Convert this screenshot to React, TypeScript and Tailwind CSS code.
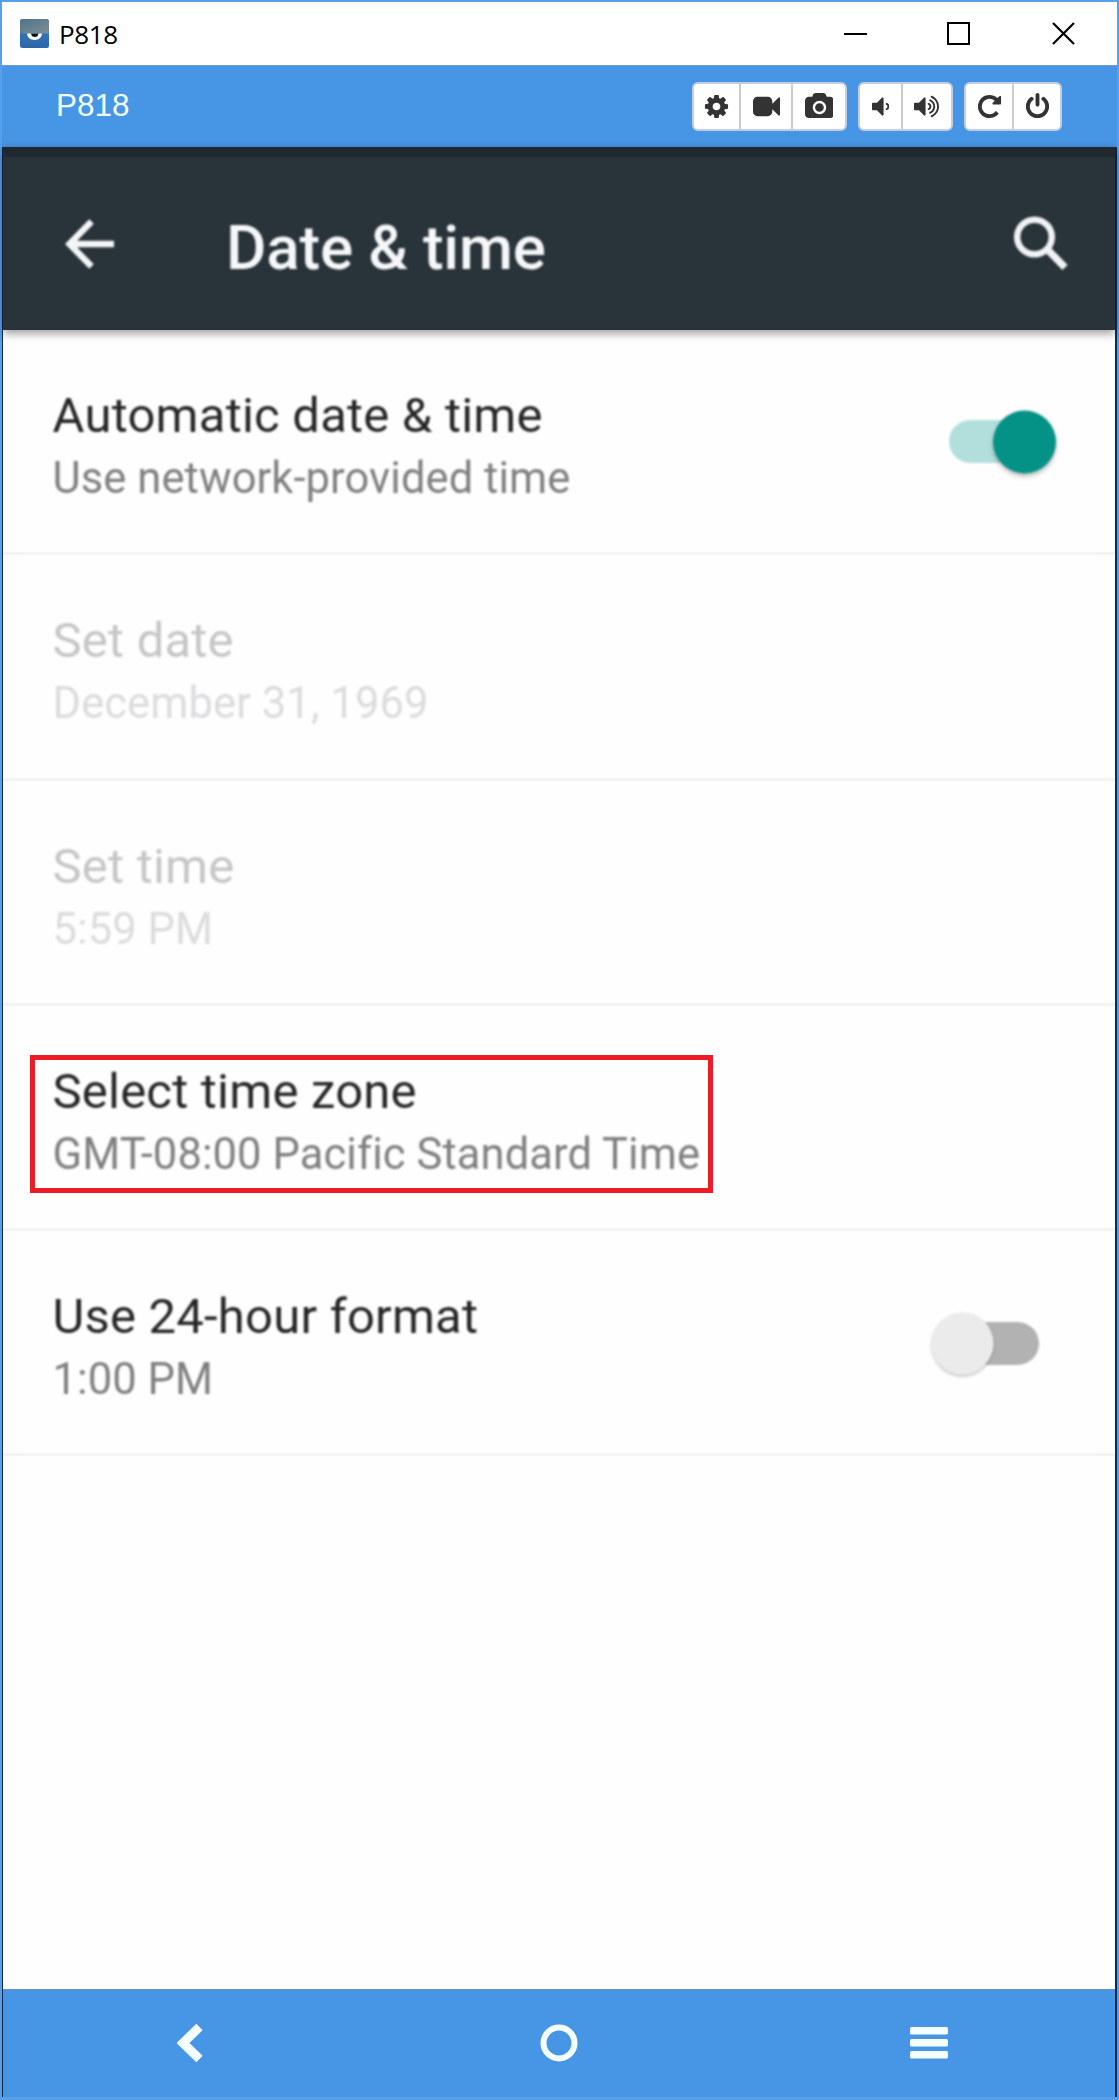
import React from "react";

const COG =
  "M1152 896q0-106-75-181t-181-75-181 75-75 181 75 181 181 75 181-75 75-181zm512-109v222q0 12-8 23t-20 13l-185 28q-19 54-39 91 35 50 107 138 10 12 10 25t-9 23q-27 37-99 108t-94 71q-12 0-26-9l-138-108q-44 23-91 38-16 136-29 186-7 28-36 28h-222q-14 0-24.5-8.5t-11.5-21.5l-28-184q-49-16-90-37l-141 107q-10 9-25 9-14 0-25-11-126-114-165-168-7-10-7-23 0-12 8-23 15-21 51-66.5t54-70.5q-27-50-41-99l-183-27q-13-2-21-12.5t-8-23.5v-222q0-12 8-23t19-13l186-28q14-46 39-92-40-57-107-138-10-12-10-24 0-10 9-23 26-36 98.5-107.5t94.5-71.5q13 0 26 10l138 107q44-23 91-38 16-136 29-186 7-28 36-28h222q14 0 24.5 8.5t11.5 21.5l28 184q49 16 90 37l142-107q9-9 24-9 13 0 25 10 129 119 165 170 7 8 7 22 0 12-8 23-15 21-51 66.5t-54 70.5q26 50 41 98l183 28q13 2 21 12.5t8 23.5z";
const VIDEO =
  "M1792 352v1088q0 42-39 59-13 5-25 5-27 0-45-19l-403-403v166q0 119-84.5 203.5T992 1536H288q-119 0-203.5-84.5T0 1248V544q0-119 84.5-203.5T288 256h704q119 0 203.5 84.5T1280 544v165l403-402q18-19 45-19 12 0 25 5 39 17 39 59z";
const CAMERA =
  "M960 672q119 0 203.5 84.5t84.5 203.5-84.5 203.5-203.5 84.5-203.5-84.5-84.5-203.5 84.5-203.5 203.5-84.5zm704-416q106 0 181 75t75 181v896q0 106-75 181t-181 75h-1408q-106 0-181-75t-75-181v-896q0-106 75-181t181-75h224l51-136q19-49 69.5-84.5t103.5-35.5h512q53 0 103.5 35.5t69.5 84.5l51 136h224zm-704 1152q185 0 316.5-131.5t131.5-316.5-131.5-316.5-316.5-131.5-316.5 131.5-131.5 316.5 131.5 316.5 316.5 131.5z";
const VOLUME_DOWN =
  "M768 352v1088q0 26-19 45t-45 19-45-19l-333-333h-262q-26 0-45-19t-19-45v-384q0-26 19-45t45-19h262l333-333q19-19 45-19t45 19 19 45zm384 544q0 76-42.5 141.5t-112.5 93.5q-10 5-25 5-26 0-45-18.5t-19-45.5q0-21 12-35.5t29-25 34-23 29-36 12-56.5-12-56.5-29-36-34-23-29-25-12-35.5q0-27 19-45.5t45-18.5q15 0 25 5 70 27 112.5 93t42.5 142z";
const VOLUME_UP =
  VOLUME_DOWN +
  "m256 0q0 153-85 282.5t-225 188.5q-13 5-25 5-27 0-46-19t-19-45q0-39 39-59 56-29 76-44 74-54 115.5-135.5t41.5-173.5-41.5-173.5-115.5-135.5q-20-15-76-44-39-20-39-59 0-26 19-45t45-19q13 0 26 5 140 59 225 188.5t85 282.5zm256 0q0 230-127 422.5t-338 283.5q-13 5-26 5-26 0-45-19t-19-45q0-36 39-59 7-4 22.5-10.5t22.5-10.5q46-25 82-51 123-91 192-227t69-289-69-289-192-227q-36-26-82-51-7-4-22.5-10.5t-22.5-10.5q-39-23-39-59 0-26 19-45t45-19q13 0 26 5 211 91 338 283.5t127 422.5z";
const REPEAT =
  "M1664 256v448q0 26-19 45t-45 19h-448q-42 0-59-40-17-39 14-69l138-138q-148-137-349-137-104 0-198.5 40.5t-163.5 109.5-109.5 163.5-40.5 198.5 40.5 198.5 109.5 163.5 163.5 109.5 198.5 40.5q119 0 225-52t179-147q7-10 23-12 15 0 25 9l137 138q9 8 9.5 20.5t-7.5 22.5q-109 132-264 204.5t-327 72.5q-156 0-298-61t-245-164-164-245-61-298 61-298 164-245 245-164 298-61q147 0 284.5 55.5t244.5 156.5l130-129q29-31 70-14 39 17 39 59z";
const POWER =
  "M1664 896q0 156-61 298t-164 245-245 164-298 61-298-61-245-164-164-245-61-298q0-182 80.5-343t226.5-270q43-32 95.5-25t83.5 50q32 42 24.5 94.5t-49.5 84.5q-98 74-151.5 181t-53.5 228q0 104 40.5 198.5t109.5 163.5 163.5 109.5 198.5 40.5 198.5-40.5 163.5-109.5 109.5-163.5 40.5-198.5q0-121-53.5-228t-151.5-181q-42-32-49.5-84.5t24.5-94.5q31-43 84-50t95 25q146 109 226.5 270t80.5 343zm-640-768v640q0 52-38 90t-90 38-90-38-38-90v-640q0-52 38-90t90-38 90 38 38 90z";

type IconDef = { d: string; units: number; cell: string; label: string };

const groups: IconDef[][] = [
  [
    { d: COG, units: 1792, cell: "w-[47px]", label: "Settings" },
    { d: VIDEO, units: 1792, cell: "w-[52px]", label: "Record" },
    { d: CAMERA, units: 1920, cell: "w-[52px]", label: "Screenshot" },
  ],
  [
    { d: VOLUME_DOWN, units: 1152, cell: "w-[43px]", label: "Volume down" },
    { d: VOLUME_UP, units: 1664, cell: "w-[48px]", label: "Volume up" },
  ],
  [
    { d: REPEAT, units: 1792, cell: "w-[48px]", label: "Rotate" },
    { d: POWER, units: 1792, cell: "w-[46px]", label: "Power" },
  ],
];

function TitleBar() {
  return (
    <div className="flex h-[63px] shrink-0 items-center bg-white pl-[18px] pr-[42px]">
      <svg width="29" height="29" viewBox="0 0 29 29">
        <defs>
          <linearGradient id="top" x1="0" y1="0" x2="1" y2="1">
            <stop offset="0" stopColor="#4f7389" />
            <stop offset="1" stopColor="#7c8f96" />
          </linearGradient>
          <linearGradient id="bottom" x1="0" y1="0" x2="0" y2="1">
            <stop offset="0" stopColor="#3a7fc6" />
            <stop offset="1" stopColor="#2c66a8" />
          </linearGradient>
        </defs>
        <rect width="29" height="29" rx="2.5" fill="url(#bottom)" />
        <path d="M0 14.500V2.500Q0 0 2.500 0h24Q29 0 29 2.500v12z" fill="url(#top)" />
        <path d="M7 14.500h15q-.5 6.500-7.500 6.500T7 14.500z" fill="#fff" />
        <path d="M11 14.500h7.500q-.5 3.500-3.700 3.500T11 14.500z" fill="#111" />
      </svg>
      <span className="ml-[10px] font-['Open_Sans','Noto_Sans',sans-serif] text-[26px] leading-8 tracking-[-0.4px] text-black">
        P818
      </span>
      <div className="ml-auto flex items-center text-black">
        <svg width="23" height="23" viewBox="0 0 23 23" fill="none" stroke="currentColor" strokeWidth="2">
          <path d="M0 12h23" />
        </svg>
        <svg className="ml-20" width="23" height="23" viewBox="0 0 23 23" fill="none" stroke="currentColor" strokeWidth="2">
          <rect x="1" y="1" width="21" height="21" />
        </svg>
        <svg className="ml-[82px]" width="23" height="23" viewBox="0 0 23 23" fill="none" stroke="currentColor" strokeWidth="2.2">
          <path d="M1 1l21 21M22 1L1 22" />
        </svg>
      </div>
    </div>
  );
}

function Toolbar() {
  return (
    <div className="flex h-[82px] shrink-0 items-center border-t border-[#6c9cc8] bg-[#4795e5] pl-[54px] pr-[55px]">
      <span className="-mt-1 font-['Liberation_Sans',Arial,sans-serif] text-[31.5px] leading-9 text-[#f4ffff]">P818</span>
      <div className="ml-auto flex gap-[11px]">
        {groups.map((g, i) => (
          <div key={i} className="box-content flex h-[45px] divide-x-2 divide-[#ccc] rounded-[6px] border-2 border-[#c3cde0] bg-white">
            {g.map((ic) => (
              <div key={ic.label} aria-label={ic.label} className={`flex items-center justify-center ${ic.cell}`}>
                <svg width={(ic.units * 27) / 1792} height="27" viewBox={`0 0 ${ic.units} 1792`} fill="#333">
                  <path d={ic.d} />
                </svg>
              </div>
            ))}
          </div>
        ))}
      </div>
    </div>
  );
}

function Header() {
  return (
    <div className="z-10 flex h-[183px] shrink-0 items-center border-t-[10px] border-[#20292f] bg-[#29333a] pl-[62px] pr-[47px] shadow-[0_3px_9px_rgba(0,0,0,0.42)]">
      <svg className="blur-[0.9px]" width="49" height="50" viewBox="0 0 49 50" fill="none" stroke="#f4f5f6" strokeWidth="6.500">
        <path d="M49 25H6M26.500 2.500L4.500 25l22 22.500" />
      </svg>
      <h1 className="ml-[112px] mt-[8px] font-['Roboto',sans-serif] text-[62px] font-medium leading-[72px] tracking-[-0.2px] text-[#f6f7f8] blur-[1px]">
        Date &amp; time
      </h1>
      <svg className="ml-auto blur-[0.9px]" width="54" height="55" viewBox="0 0 54 55" fill="none" stroke="#f0f2f4">
        <circle cx="20.500" cy="21" r="17.300" strokeWidth="6.500" />
        <path d="M33 33l18 18.500" strokeWidth="7.500" />
      </svg>
    </div>
  );
}

function Switch({ on }: { on: boolean }) {
  return (
    <svg className="overflow-visible blur-[0.9px]" width="108" height="64" viewBox="0 0 108 64">
      {on ? (
        <>
          <rect x="0" y="10" width="100" height="43" rx="21.500" fill="#b2dfdc" />
          <circle className="drop-shadow-[0_3px_2px_rgba(0,0,0,0.25)]" cx="75.500" cy="32" r="31.500" fill="#049286" />
        </>
      ) : (
        <>
          <rect x="8" y="10" width="100" height="43" rx="21.500" fill="#b2b2b2" />
          <circle className="drop-shadow-[0_2px_1.5px_rgba(0,0,0,0.22)]" cx="31.500" cy="31.500" r="31" fill="#ebebeb" />
        </>
      )}
    </svg>
  );
}

type RowProps = { title: string; sub: string; disabled?: boolean; highlight?: boolean; children?: React.ReactNode };

function Row({ title, sub, disabled, highlight, children }: RowProps) {
  return (
    <div className="relative flex h-[225.3px] shrink-0 items-start border-b-[3px] border-[#f4f4f4] pl-[49.5px] pt-[55px]">
      <div className="whitespace-nowrap font-['Roboto',sans-serif] blur-[1.1px]">
        <div className={`text-[49px] leading-[61px] tracking-[0.22px] ${disabled ? "text-[#c6c6c6]" : "text-[#262626]"}`}>{title}</div>
        <div className={`text-[43.5px] leading-[65px] tracking-[0.08px] ${disabled ? "text-[#dcdcde]" : "text-[#808080]"}`}>{sub}</div>
      </div>
      {children}
      {highlight && <div className="absolute left-[27px] top-[49px] h-[138px] w-[683px] border-[5px] border-[#ed1c24]" />}
    </div>
  );
}

function NavBar() {
  return (
    <div className="grid h-[108px] shrink-0 grid-cols-3 items-center border-t border-[#6c8fb4] bg-[#4795e5] pb-0.5">
      <svg className="ml-[174px]" width="27" height="40" viewBox="0 0 27 40" fill="none" stroke="#f6ffff" strokeWidth="9">
        <path d="M22.500 4L6 20l16.500 16" />
      </svg>
      <svg className="mx-auto" width="38" height="38" viewBox="0 0 38 38" fill="none" stroke="#f6ffff" strokeWidth="6">
        <circle cx="19" cy="19" r="15.500" />
      </svg>
      <svg className="ml-[166px]" width="38" height="32" viewBox="0 0 38 32" fill="#f6ffff">
        <rect width="38" height="7.500" rx="1.500" />
        <rect y="12" width="38" height="7.500" rx="1.500" />
        <rect y="24" width="38" height="7.500" rx="1.500" />
      </svg>
    </div>
  );
}

export default function App() {
  return (
    <div className="flex h-[2100px] w-[1119px] flex-col border-2 border-b-[3px] border-[#589fe9] bg-white">
      <TitleBar />
      <Toolbar />
      <div className="flex min-h-0 flex-1 flex-col border-l border-r-2 border-l-[#12294a] border-r-[#12294a]">
        <Header />
        <div className="flex min-h-0 flex-1 flex-col bg-[#fefefe]">
          <Row title="Automatic date & time" sub="Use network-provided time">
            <div className="ml-auto mr-[58px] mt-[25px]">
              <Switch on />
            </div>
          </Row>
          <Row title="Set date" sub="December 31, 1969" disabled />
          <Row title="Set time" sub="5:59 PM" disabled />
          <Row title="Select time zone" sub="GMT-08:00 Pacific Standard Time" highlight />
          <Row title="Use 24-hour format" sub="1:00 PM">
            <div className="ml-auto mr-[76px] mt-[26px]">
              <Switch on={false} />
            </div>
          </Row>
        </div>
        <NavBar />
      </div>
    </div>
  );
}
